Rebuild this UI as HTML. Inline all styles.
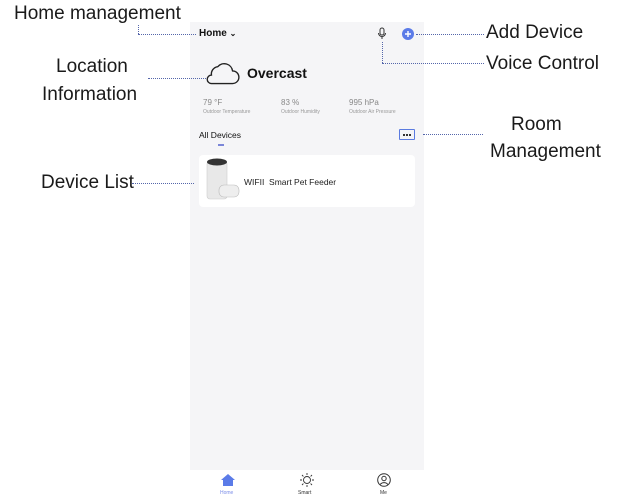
<!DOCTYPE html>
<html><head><meta charset="utf-8"><style>
*{margin:0;padding:0;box-sizing:border-box}
body{width:626px;height:503px;background:#fff;position:relative;overflow:hidden;font-family:"Liberation Sans",sans-serif;color:#111}
.a{position:absolute;white-space:nowrap}
.lbl{font-family:"Liberation Sans Narrow","Liberation Sans",sans-serif;font-size:19px;color:#1a1a1a}
.dot{position:absolute;border-top:1.5px dotted #5566aa}
.vd{position:absolute;border-left:1.5px dotted #5566aa}
#ph{position:absolute;left:190px;top:22px;width:234px;height:481px;background:#f5f5f7}
.s{font-size:5px;color:#999}
.v{font-size:8px;color:#888}
</style></head><body>
<div id="ph"></div>
<div class="a" style="left:190px;top:470px;width:234px;height:33px;background:#fff"></div>

<div class="a lbl" style="left:14px;top:3px">Home management</div>
<div class="vd" style="left:138px;top:25px;height:9px"></div>
<div class="dot" style="left:138px;top:34px;width:58px"></div>
<div class="a" style="left:199px;top:28px;font-size:10px;font-weight:bold">Home <span style="font-size:8px">⌄</span></div>

<div class="a lbl" style="left:56px;top:56px">Location</div>
<div class="a lbl" style="left:42px;top:84px">Information</div>
<div class="dot" style="left:148px;top:78px;width:58px"></div>
<svg class="a" style="left:203px;top:60px" width="38" height="26" viewBox="0 0 36 24"><path d="M8 22 H28 A6 6 0 0 0 28 10 A8 8 0 0 0 14 6 A7 7 0 0 0 8 14 A4 4 0 0 0 8 22 Z" fill="none" stroke="#222" stroke-width="1.3"/></svg>
<div class="a" style="left:247px;top:65px;font-size:14px;font-weight:bold">Overcast</div>

<div class="a v" style="left:203px;top:98px">79 °F</div>
<div class="a s" style="left:203px;top:109px">Outdoor Temperature</div>
<div class="a v" style="left:281px;top:98px">83 %</div>
<div class="a s" style="left:281px;top:109px">Outdoor Humidity</div>
<div class="a v" style="left:349px;top:98px">995 hPa</div>
<div class="a s" style="left:349px;top:109px">Outdoor Air Pressure</div>

<div class="a" style="left:199px;top:130px;font-size:8.5px">All Devices</div>
<div class="a" style="left:218px;top:144px;width:6px;height:2px;background:#7b86d8"></div>
<div class="a" style="left:399px;top:129px;width:16px;height:11px;border:1px solid #5b7be0;border-radius:1px"></div>
<div class="a" style="left:403px;top:134px;width:2px;height:2px;background:#333"></div>
<div class="a" style="left:406px;top:134px;width:2px;height:2px;background:#333"></div>
<div class="a" style="left:409px;top:134px;width:2px;height:2px;background:#333"></div>
<div class="dot" style="left:423px;top:134px;width:60px"></div>
<div class="a lbl" style="left:511px;top:114px">Room</div>
<div class="a lbl" style="left:490px;top:141px">Management</div>

<div class="a" style="left:199px;top:155px;width:216px;height:52px;background:#fff;border-radius:4px"></div>
<svg class="a" style="left:205px;top:157px" width="36" height="44" viewBox="0 0 36 44"><rect x="2" y="4" width="20" height="38" rx="3" fill="#e8e8e8" stroke="#ccc" stroke-width=".6"/><ellipse cx="12" cy="5" rx="10" ry="3.5" fill="#333"/><rect x="14" y="28" width="20" height="12" rx="5" fill="#eee" stroke="#bbb" stroke-width=".6"/></svg>
<div class="a" style="left:244px;top:177px;font-size:8.5px;color:#222">WIFII&nbsp; Smart Pet Feeder</div>
<div class="a lbl" style="left:41px;top:172px">Device List</div>
<div class="dot" style="left:132px;top:183px;width:62px"></div>

<svg class="a" style="left:377px;top:27px" width="10" height="14" viewBox="0 0 10 14"><rect x="3" y="1" width="4" height="7" rx="2" fill="none" stroke="#333" stroke-width="1"/><path d="M1.5 6 A3.5 3.5 0 0 0 8.5 6 M5 9.5 V12" fill="none" stroke="#333" stroke-width="1"/></svg>
<div class="vd" style="left:382px;top:42px;height:21px"></div>
<div class="dot" style="left:382px;top:63px;width:102px"></div>
<div class="a lbl" style="left:486px;top:53px">Voice Control</div>
<svg class="a" style="left:402px;top:28px" width="12" height="12" viewBox="0 0 12 12"><circle cx="6" cy="6" r="6" fill="#5b7be8"/><path d="M6 3V9M3 6H9" stroke="#fff" stroke-width="1.4"/></svg>
<div class="dot" style="left:416px;top:34px;width:68px"></div>
<div class="a lbl" style="left:486px;top:22px">Add Device</div>

<svg class="a" style="left:221px;top:474px" width="14" height="12" viewBox="0 0 14 12"><path d="M7 0 L14 6 H12 V12 H2 V6 H0 Z" fill="#5b7be8"/></svg>
<div class="a" style="left:220px;top:490px;font-size:5px;color:#7b8de8">Home</div>
<svg class="a" style="left:300px;top:473px" width="14" height="14" viewBox="0 0 14 14"><circle cx="7" cy="7" r="3.5" fill="none" stroke="#333" stroke-width=".9"/><path d="M7 0V2M7 12V14M0 7H2M12 7H14M2 2L3.4 3.4M10.6 10.6L12 12M2 12L3.4 10.6M10.6 3.4L12 2" stroke="#333" stroke-width=".9"/></svg>
<div class="a" style="left:298px;top:490px;font-size:5px;color:#333">Smart</div>
<svg class="a" style="left:377px;top:473px" width="14" height="14" viewBox="0 0 14 14"><circle cx="7" cy="7" r="6.3" fill="none" stroke="#333" stroke-width="1"/><circle cx="7" cy="5.5" r="2.2" fill="none" stroke="#333" stroke-width="1"/><path d="M3.2 11.5 A4.5 4 0 0 1 10.8 11.5" fill="none" stroke="#333" stroke-width="1"/></svg>
<div class="a" style="left:380px;top:490px;font-size:5px;color:#333">Me</div>
</body></html>
